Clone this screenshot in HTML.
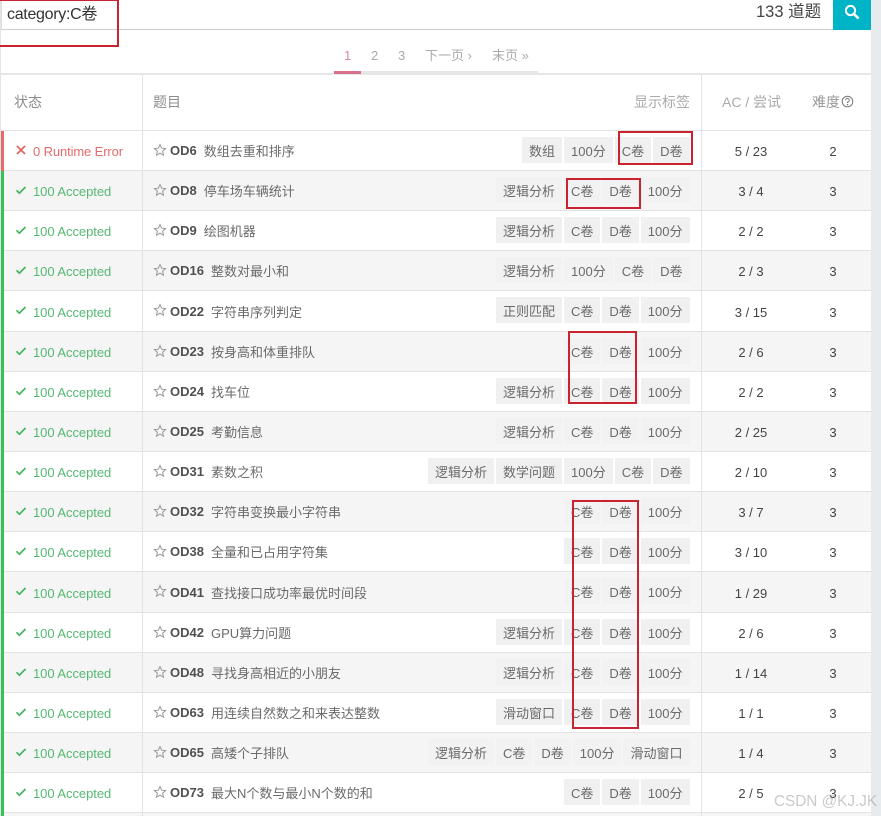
<!DOCTYPE html>
<html lang="zh">
<head>
<meta charset="utf-8">
<title>题目列表</title>
<style>
html,body{margin:0;padding:0;width:881px;height:816px;overflow:hidden;background:#fff}
body{position:relative;font-family:"Liberation Sans","Noto Sans CJK SC",sans-serif;font-size:13px;color:#666}
.abs{position:absolute}
.r{position:absolute;left:1px;width:870px;border-bottom:1px solid #e3e3e3;box-sizing:border-box;background:#fff}
.g{background:#f5f5f5}
.st{position:absolute;left:32px;top:1px;bottom:-1px;display:flex;align-items:center;color:#55b872;white-space:nowrap;letter-spacing:-.05px}
.e{color:#e56b6b;left:32px;letter-spacing:-.12px}
.ic{position:absolute;left:14px;top:50%;margin-top:-7px}
.sv{position:absolute;left:152px;top:50%;margin-top:-8px}
.t{position:absolute;left:169px;top:0;bottom:0;display:flex;align-items:center;white-space:nowrap;color:#6a6a6a}
.t b{color:#505050;margin-right:7px;font-weight:bold}
.tags{position:absolute;right:181.5px;top:50%;margin-top:-14px;display:flex;gap:2px}
.tags i{font-style:normal;display:block;height:26px;line-height:29px;padding:0 7px;background:#f0f0f0;color:#6a6a6a;white-space:nowrap}
.g .tags i{background:#f2f2f2}
.ac{position:absolute;left:700px;width:100px;top:1px;bottom:-1px;display:flex;align-items:center;justify-content:center;color:#444}
.df{position:absolute;left:812px;width:40px;top:1px;bottom:-1px;display:flex;align-items:center;justify-content:center;color:#444}
.box{position:absolute;border:2px solid #c9232f;box-sizing:border-box;z-index:5}
.h{font-size:14px;line-height:18px;white-space:nowrap}
</style>
</head>
<body>
<svg width="0" height="0" style="position:absolute"><defs>
<symbol id="ck" viewBox="0 0 12 12"><path d="M1.5 6.3 L4.4 9.2 L10.5 3" fill="none" stroke="#3fb55c" stroke-width="1.7"/></symbol>
<symbol id="xx" viewBox="0 0 12 12"><path d="M2 2 L10 10 M10 2 L2 10" fill="none" stroke="#e25f5f" stroke-width="1.6"/></symbol>
<symbol id="st" viewBox="0 0 14 14"><path d="M7 1.5 L8.6 5.2 L12.6 5.6 L9.6 8.2 L10.5 12.2 L7 10.1 L3.5 12.2 L4.4 8.2 L1.4 5.6 L5.4 5.2 Z" fill="none" stroke="#999" stroke-width="1"/></symbol>
</defs></svg>

<div class="abs" style="left:871px;top:0;width:10px;height:816px;background:#e8ebed"></div>
<div class="abs" style="left:0;top:0;width:1px;height:816px;background:#e3e3e3"></div>

<div class="abs" style="left:1px;top:0;width:832px;height:30px;border-bottom:1px solid #cfcfcf;border-left:1px solid #ddd;box-sizing:border-box"></div>
<div class="abs" style="left:7px;top:4px;font-size:16px;line-height:22px;color:#333;letter-spacing:-.3px">category:C卷</div>
<div class="abs" style="left:756px;top:1px;font-size:16.5px;line-height:22px;color:#444">133 道题</div>
<div class="abs" style="left:833px;top:0;width:38px;height:30px;background:#00b4c8">
<svg width="18" height="18" viewBox="0 0 18 18" style="position:absolute;left:10px;top:3px"><circle cx="7.5" cy="7.5" r="4.6" fill="none" stroke="#fff" stroke-width="2"/><path d="M11 11 L15.5 15.5" stroke="#fff" stroke-width="2.6"/></svg>
</div>

<div class="abs" style="left:0;top:73px;width:871px;height:2px;background:#e6e6e6"></div>
<div class="abs" style="left:334px;top:71px;width:204px;height:3px;background:#e6e6e6"></div>
<div class="abs" style="left:334px;top:71px;width:27px;height:3px;background:#d9708a"></div>
<div class="abs" style="left:344px;top:47px;line-height:18px;color:#d98a9c">1</div>
<div class="abs" style="left:371px;top:47px;line-height:18px;color:#aaa">2</div>
<div class="abs" style="left:398px;top:47px;line-height:18px;color:#aaa">3</div>
<div class="abs" style="left:425px;top:47px;line-height:18px;color:#aaa;white-space:nowrap">下一页 ›</div>
<div class="abs" style="left:492px;top:47px;line-height:18px;color:#aaa;white-space:nowrap">末页 »</div>

<div class="abs h" style="left:14px;top:93px;color:#8c8c8c">状态</div>
<div class="abs h" style="left:153px;top:93px;color:#8c8c8c">题目</div>
<div class="abs h" style="left:634px;top:93px;color:#aaa">显示标签</div>
<div class="abs h" style="left:722px;top:93px;color:#aaa">AC / 尝试</div>
<div class="abs h" style="left:812px;top:93px;color:#999">难度</div>
<svg class="abs" style="left:841px;top:95px" width="13" height="13" viewBox="0 0 13 13"><circle cx="6.5" cy="6.5" r="5.3" fill="none" stroke="#777" stroke-width="1"/><path d="M4.7 5.2 A1.8 1.8 0 1 1 6.5 7 V8" fill="none" stroke="#777" stroke-width="1"/><circle cx="6.5" cy="9.6" r=".7" fill="#777"/></svg>
<div class="abs" style="left:1px;top:130px;width:870px;height:1px;background:#e3e3e3"></div>

<div class="r" style="top:131px;height:40px"><svg class="ic" width="12" height="12"><use href="#xx"/></svg><div class="st e">0 Runtime Error</div><svg class="sv" width="14" height="14"><use href="#st"/></svg><div class="t"><b>OD6</b>数组去重和排序</div><div class="tags"><i>数组</i><i>100分</i><i>C卷</i><i>D卷</i></div><div class="ac">5 / 23</div><div class="df">2</div></div>
<div class="r g" style="top:171px;height:40px"><svg class="ic" width="12" height="12"><use href="#ck"/></svg><div class="st">100 Accepted</div><svg class="sv" width="14" height="14"><use href="#st"/></svg><div class="t"><b>OD8</b>停车场车辆统计</div><div class="tags"><i>逻辑分析</i><i>C卷</i><i>D卷</i><i>100分</i></div><div class="ac">3 / 4</div><div class="df">3</div></div>
<div class="r" style="top:211px;height:40px"><svg class="ic" width="12" height="12"><use href="#ck"/></svg><div class="st">100 Accepted</div><svg class="sv" width="14" height="14"><use href="#st"/></svg><div class="t"><b>OD9</b>绘图机器</div><div class="tags"><i>逻辑分析</i><i>C卷</i><i>D卷</i><i>100分</i></div><div class="ac">2 / 2</div><div class="df">3</div></div>
<div class="r g" style="top:251px;height:40px"><svg class="ic" width="12" height="12"><use href="#ck"/></svg><div class="st">100 Accepted</div><svg class="sv" width="14" height="14"><use href="#st"/></svg><div class="t"><b>OD16</b>整数对最小和</div><div class="tags"><i>逻辑分析</i><i>100分</i><i>C卷</i><i>D卷</i></div><div class="ac">2 / 3</div><div class="df">3</div></div>
<div class="r" style="top:291px;height:41px"><svg class="ic" width="12" height="12"><use href="#ck"/></svg><div class="st">100 Accepted</div><svg class="sv" width="14" height="14"><use href="#st"/></svg><div class="t"><b>OD22</b>字符串序列判定</div><div class="tags"><i>正则匹配</i><i>C卷</i><i>D卷</i><i>100分</i></div><div class="ac">3 / 15</div><div class="df">3</div></div>
<div class="r g" style="top:332px;height:40px"><svg class="ic" width="12" height="12"><use href="#ck"/></svg><div class="st">100 Accepted</div><svg class="sv" width="14" height="14"><use href="#st"/></svg><div class="t"><b>OD23</b>按身高和体重排队</div><div class="tags"><i>C卷</i><i>D卷</i><i>100分</i></div><div class="ac">2 / 6</div><div class="df">3</div></div>
<div class="r" style="top:372px;height:40px"><svg class="ic" width="12" height="12"><use href="#ck"/></svg><div class="st">100 Accepted</div><svg class="sv" width="14" height="14"><use href="#st"/></svg><div class="t"><b>OD24</b>找车位</div><div class="tags"><i>逻辑分析</i><i>C卷</i><i>D卷</i><i>100分</i></div><div class="ac">2 / 2</div><div class="df">3</div></div>
<div class="r g" style="top:412px;height:40px"><svg class="ic" width="12" height="12"><use href="#ck"/></svg><div class="st">100 Accepted</div><svg class="sv" width="14" height="14"><use href="#st"/></svg><div class="t"><b>OD25</b>考勤信息</div><div class="tags"><i>逻辑分析</i><i>C卷</i><i>D卷</i><i>100分</i></div><div class="ac">2 / 25</div><div class="df">3</div></div>
<div class="r" style="top:452px;height:40px"><svg class="ic" width="12" height="12"><use href="#ck"/></svg><div class="st">100 Accepted</div><svg class="sv" width="14" height="14"><use href="#st"/></svg><div class="t"><b>OD31</b>素数之积</div><div class="tags"><i>逻辑分析</i><i>数学问题</i><i>100分</i><i>C卷</i><i>D卷</i></div><div class="ac">2 / 10</div><div class="df">3</div></div>
<div class="r g" style="top:492px;height:40px"><svg class="ic" width="12" height="12"><use href="#ck"/></svg><div class="st">100 Accepted</div><svg class="sv" width="14" height="14"><use href="#st"/></svg><div class="t"><b>OD32</b>字符串变换最小字符串</div><div class="tags"><i>C卷</i><i>D卷</i><i>100分</i></div><div class="ac">3 / 7</div><div class="df">3</div></div>
<div class="r" style="top:532px;height:40px"><svg class="ic" width="12" height="12"><use href="#ck"/></svg><div class="st">100 Accepted</div><svg class="sv" width="14" height="14"><use href="#st"/></svg><div class="t"><b>OD38</b>全量和已占用字符集</div><div class="tags"><i>C卷</i><i>D卷</i><i>100分</i></div><div class="ac">3 / 10</div><div class="df">3</div></div>
<div class="r g" style="top:572px;height:41px"><svg class="ic" width="12" height="12"><use href="#ck"/></svg><div class="st">100 Accepted</div><svg class="sv" width="14" height="14"><use href="#st"/></svg><div class="t"><b>OD41</b>查找接口成功率最优时间段</div><div class="tags"><i>C卷</i><i>D卷</i><i>100分</i></div><div class="ac">1 / 29</div><div class="df">3</div></div>
<div class="r" style="top:613px;height:40px"><svg class="ic" width="12" height="12"><use href="#ck"/></svg><div class="st">100 Accepted</div><svg class="sv" width="14" height="14"><use href="#st"/></svg><div class="t"><b>OD42</b>GPU算力问题</div><div class="tags"><i>逻辑分析</i><i>C卷</i><i>D卷</i><i>100分</i></div><div class="ac">2 / 6</div><div class="df">3</div></div>
<div class="r g" style="top:653px;height:40px"><svg class="ic" width="12" height="12"><use href="#ck"/></svg><div class="st">100 Accepted</div><svg class="sv" width="14" height="14"><use href="#st"/></svg><div class="t"><b>OD48</b>寻找身高相近的小朋友</div><div class="tags"><i>逻辑分析</i><i>C卷</i><i>D卷</i><i>100分</i></div><div class="ac">1 / 14</div><div class="df">3</div></div>
<div class="r" style="top:693px;height:40px"><svg class="ic" width="12" height="12"><use href="#ck"/></svg><div class="st">100 Accepted</div><svg class="sv" width="14" height="14"><use href="#st"/></svg><div class="t"><b>OD63</b>用连续自然数之和来表达整数</div><div class="tags"><i>滑动窗口</i><i>C卷</i><i>D卷</i><i>100分</i></div><div class="ac">1 / 1</div><div class="df">3</div></div>
<div class="r g" style="top:733px;height:40px"><svg class="ic" width="12" height="12"><use href="#ck"/></svg><div class="st">100 Accepted</div><svg class="sv" width="14" height="14"><use href="#st"/></svg><div class="t"><b>OD65</b>高矮个子排队</div><div class="tags"><i>逻辑分析</i><i>C卷</i><i>D卷</i><i>100分</i><i>滑动窗口</i></div><div class="ac">1 / 4</div><div class="df">3</div></div>
<div class="r" style="top:773px;height:40px"><svg class="ic" width="12" height="12"><use href="#ck"/></svg><div class="st">100 Accepted</div><svg class="sv" width="14" height="14"><use href="#st"/></svg><div class="t"><b>OD73</b>最大N个数与最小N个数的和</div><div class="tags"><i>C卷</i><i>D卷</i><i>100分</i></div><div class="ac">2 / 5</div><div class="df">3</div></div>
<div class="r g" style="top:813px;height:3px;border:0"></div>

<div class="abs" style="left:142px;top:75px;width:1px;height:741px;background:#e3e3e3"></div>
<div class="abs" style="left:701px;top:75px;width:1px;height:741px;background:#e3e3e3"></div>
<div class="abs" style="left:1px;top:131px;width:3px;height:40px;background:#e86a6a"></div>
<div class="abs" style="left:1px;top:171px;width:3px;height:645px;background:#35c05a"></div>

<div class="box" style="left:-3px;top:-1px;width:122px;height:48px"></div>
<div class="box" style="left:618px;top:131px;width:75px;height:34px"></div>
<div class="box" style="left:566px;top:178px;width:75px;height:31px"></div>
<div class="box" style="left:568px;top:331px;width:69px;height:73px"></div>
<div class="box" style="left:572px;top:500px;width:67px;height:229px"></div>

<div class="abs" style="left:774px;top:793px;font-size:15.3px;line-height:18px;color:rgba(150,150,150,.5);white-space:nowrap;z-index:6">CSDN @KJ.JK</div>
</body>
</html>
